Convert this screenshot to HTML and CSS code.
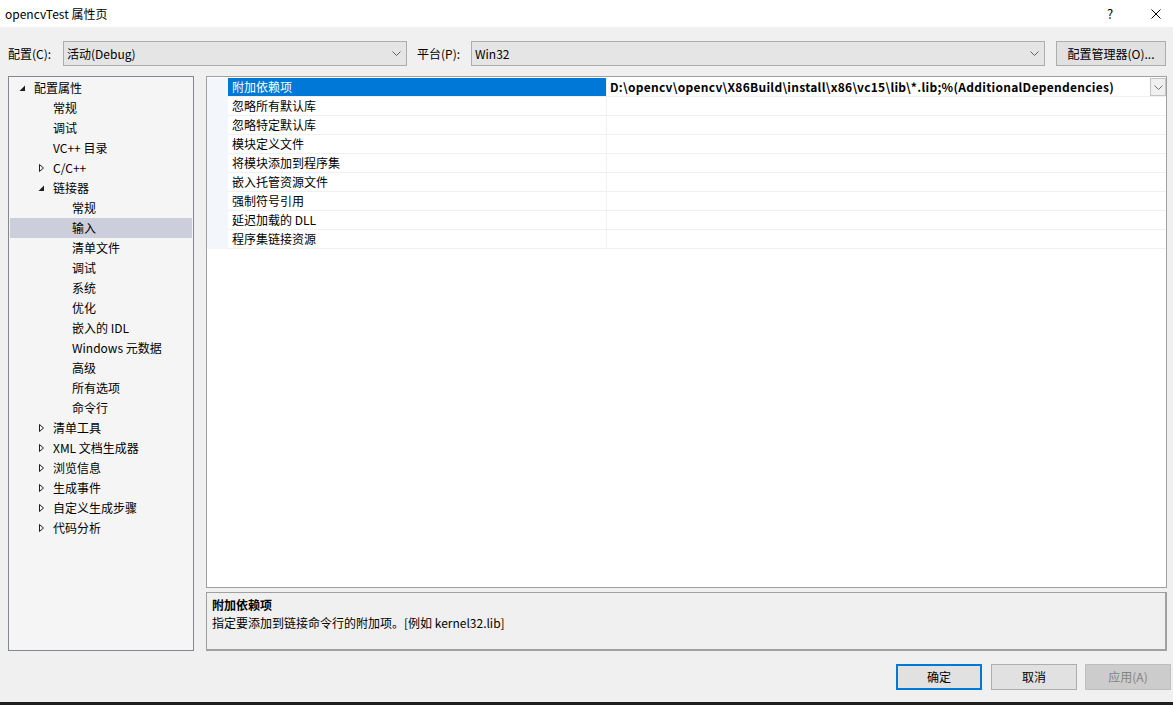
FILE: index.html
```html
<!DOCTYPE html>
<html lang="zh-CN">
<head>
<meta charset="utf-8">
<title>opencvTest 属性页</title>
<link rel="stylesheet" href="styles.css">
</head>
<body>
<div class="window">
  <div class="titlebar">
    <span class="title">opencvTest 属性页</span>
    <div class="title-controls">
      <span class="help">?</span>
      <svg class="close" width="10" height="10" viewBox="0 0 10 10"><path d="M0.5 0.5 L9.5 9.5 M9.5 0.5 L0.5 9.5" stroke="#000" stroke-width="1" fill="none"/></svg>
    </div>
  </div>

  <div class="dialog">
    <div class="config-row">
      <span class="lbl lbl-config">配置(C):</span>
      <div class="combo combo-config">
        <span class="combo-text">活动(Debug)</span>
        <svg class="chev" width="9" height="5" viewBox="0 0 9 5"><path d="M0.5 0.5 L4.5 4.5 L8.5 0.5" stroke="#606060" fill="none"/></svg>
      </div>
      <span class="lbl lbl-platform">平台(P):</span>
      <div class="combo combo-platform">
        <span class="combo-text">Win32</span>
        <svg class="chev" width="9" height="5" viewBox="0 0 9 5"><path d="M0.5 0.5 L4.5 4.5 L8.5 0.5" stroke="#606060" fill="none"/></svg>
      </div>
      <button class="btn btn-manager">配置管理器(O)...</button>
    </div>

    <div class="content">
      <div class="tree">
        <div class="node lv0"><svg class="exp" width="16" height="20" viewBox="0 0 16 20"><polygon points="1.5,13 7,13 7,7.5" fill="#1e1e1e"/></svg><span>配置属性</span></div>
        <div class="node lv1"><span class="noexp"></span><span>常规</span></div>
        <div class="node lv1"><span class="noexp"></span><span>调试</span></div>
        <div class="node lv1"><span class="noexp"></span><span>VC++ 目录</span></div>
        <div class="node lv1"><svg class="exp" width="16" height="20" viewBox="0 0 16 20"><polygon points="2.5,6.5 6.5,10 2.5,13.5" fill="none" stroke="#1e1e1e"/></svg><span>C/C++</span></div>
        <div class="node lv1"><svg class="exp" width="16" height="20" viewBox="0 0 16 20"><polygon points="1.5,13 7,13 7,7.5" fill="#1e1e1e"/></svg><span>链接器</span></div>
        <div class="node lv2"><span class="noexp"></span><span>常规</span></div>
        <div class="node lv2 selected"><span class="noexp"></span><span>输入</span></div>
        <div class="node lv2"><span class="noexp"></span><span>清单文件</span></div>
        <div class="node lv2"><span class="noexp"></span><span>调试</span></div>
        <div class="node lv2"><span class="noexp"></span><span>系统</span></div>
        <div class="node lv2"><span class="noexp"></span><span>优化</span></div>
        <div class="node lv2"><span class="noexp"></span><span>嵌入的 IDL</span></div>
        <div class="node lv2"><span class="noexp"></span><span>Windows 元数据</span></div>
        <div class="node lv2"><span class="noexp"></span><span>高级</span></div>
        <div class="node lv2"><span class="noexp"></span><span>所有选项</span></div>
        <div class="node lv2"><span class="noexp"></span><span>命令行</span></div>
        <div class="node lv1"><svg class="exp" width="16" height="20" viewBox="0 0 16 20"><polygon points="2.5,6.5 6.5,10 2.5,13.5" fill="none" stroke="#1e1e1e"/></svg><span>清单工具</span></div>
        <div class="node lv1"><svg class="exp" width="16" height="20" viewBox="0 0 16 20"><polygon points="2.5,6.5 6.5,10 2.5,13.5" fill="none" stroke="#1e1e1e"/></svg><span>XML 文档生成器</span></div>
        <div class="node lv1"><svg class="exp" width="16" height="20" viewBox="0 0 16 20"><polygon points="2.5,6.5 6.5,10 2.5,13.5" fill="none" stroke="#1e1e1e"/></svg><span>浏览信息</span></div>
        <div class="node lv1"><svg class="exp" width="16" height="20" viewBox="0 0 16 20"><polygon points="2.5,6.5 6.5,10 2.5,13.5" fill="none" stroke="#1e1e1e"/></svg><span>生成事件</span></div>
        <div class="node lv1"><svg class="exp" width="16" height="20" viewBox="0 0 16 20"><polygon points="2.5,6.5 6.5,10 2.5,13.5" fill="none" stroke="#1e1e1e"/></svg><span>自定义生成步骤</span></div>
        <div class="node lv1"><svg class="exp" width="16" height="20" viewBox="0 0 16 20"><polygon points="2.5,6.5 6.5,10 2.5,13.5" fill="none" stroke="#1e1e1e"/></svg><span>代码分析</span></div>
      </div>

      <div class="right">
        <div class="grid">
          <div class="row">
            <div class="gutter"></div>
            <div class="name selected">附加依赖项</div>
            <div class="value">D:\opencv\opencv\X86Build\install\x86\vc15\lib\*.lib;%(AdditionalDependencies)
              <span class="dd"><svg width="9" height="5" viewBox="0 0 9 5"><path d="M0.5 0.5 L4.5 4.5 L8.5 0.5" stroke="#707070" fill="none"/></svg></span>
            </div>
          </div>
          <div class="row"><div class="gutter"></div><div class="name">忽略所有默认库</div><div class="value"></div></div>
          <div class="row"><div class="gutter"></div><div class="name">忽略特定默认库</div><div class="value"></div></div>
          <div class="row"><div class="gutter"></div><div class="name">模块定义文件</div><div class="value"></div></div>
          <div class="row"><div class="gutter"></div><div class="name">将模块添加到程序集</div><div class="value"></div></div>
          <div class="row"><div class="gutter"></div><div class="name">嵌入托管资源文件</div><div class="value"></div></div>
          <div class="row"><div class="gutter"></div><div class="name">强制符号引用</div><div class="value"></div></div>
          <div class="row"><div class="gutter"></div><div class="name">延迟加载的 DLL</div><div class="value"></div></div>
          <div class="row"><div class="gutter"></div><div class="name">程序集链接资源</div><div class="value"></div></div>
        </div>
        <div class="desc">
          <div class="desc-title">附加依赖项</div>
          <div class="desc-text">指定要添加到链接命令行的附加项。[例如 kernel32.lib]</div>
        </div>
      </div>
    </div>

    <div class="footer">
      <button class="btn btn-ok">确定</button>
      <button class="btn btn-cancel">取消</button>
      <button class="btn btn-apply" disabled>应用(A)</button>
    </div>
  </div>

  <div class="strip"></div>
</div>
</body>
</html>
```

FILE: styles.css
```css
* { box-sizing: border-box; }
html, body { margin: 0; padding: 0; }
body {
  width: 1173px;
  height: 705px;
  overflow: hidden;
  background: #f0f0f0;
  font-family: "Noto Sans CJK SC", "Noto Sans", sans-serif;
  font-size: 12px;
  color: #000;
}
.window {
  display: flex;
  flex-direction: column;
  height: 705px;
}

/* title bar */
.titlebar {
  flex: none;
  height: 27px;
  background: #fff;
  display: flex;
  align-items: center;
  padding-left: 5px;
  padding-right: 12px;
}
.title { line-height: 16px; }
.title-controls {
  margin-left: auto;
  display: flex;
  align-items: center;
}
.help {
  width: 10px;
  text-align: center;
  font-size: 13px;
  line-height: 16px;
  margin-right: 36px;
}
.close { display: block; }

/* dialog body */
.dialog {
  flex: none;
  padding-left: 8px;
  display: flex;
  flex-direction: column;
}

.config-row {
  margin-top: 14px;
  height: 25px;
  display: flex;
  align-items: stretch;
}
.lbl {
  display: flex;
  align-items: center;
  line-height: 16px;
}
.lbl-config { width: 55px; }
.lbl-platform { width: 54px; margin-left: 10px; }
.combo {
  display: flex;
  align-items: center;
  background: #e5e5e5;
  border: 1px solid #acacac;
  padding-left: 3px;
  padding-right: 5px;
}
.combo-config { width: 344px; }
.combo-platform { width: 574px; }
.combo-text { line-height: 16px; }
.chev { margin-left: auto; display: block; }

.btn {
  font-family: inherit;
  font-size: 12px;
  color: #000;
  background: #e1e1e1;
  border: 1px solid #adadad;
  padding: 0;
  margin: 0;
  line-height: 16px;
}
.btn-manager {
  width: 110px;
  margin-left: 11px;
}

/* content */
.content {
  margin-top: 10px;
  height: 575px;
  display: flex;
}
.tree {
  width: 186px;
  background: #f5f5f5;
  border: 1px solid #828790;
  padding: 1px;
  overflow: hidden;
}
.node {
  height: 20px;
  display: flex;
  align-items: center;
  line-height: 20px;
  color: #000;
  white-space: nowrap;
}
.node.lv0 { padding-left: 8px; }
.node.lv1 { padding-left: 27px; }
.node.lv2 { padding-left: 46px; }
.node.selected { background: #cccedb; }
.exp { display: block; flex: none; }
.noexp { display: block; width: 16px; flex: none; }

.right {
  width: 961px;
  margin-left: 12px;
  display: flex;
  flex-direction: column;
}
.grid {
  height: 512px;
  background: #fff;
  border: 1px solid #a0a0a0;
  padding-top: 1px;
}
.row {
  display: grid;
  grid-template-columns: 21px 379px 1fr;
  height: 19px;
}
.gutter { background: #f3f6fb; }
.name {
  border-right: 1px solid #f0f0f0;
  border-bottom: 1px solid #f0f0f0;
  padding-left: 4px;
  line-height: 18px;
  white-space: nowrap;
}
.name.selected {
  background: #0078d7;
  color: #fff;
}
.value {
  position: relative;
  border-bottom: 1px solid #f0f0f0;
  padding-left: 3px;
  line-height: 18px;
  font-weight: bold;
  letter-spacing: 0.28px;
  white-space: nowrap;
}
.dd {
  position: absolute;
  right: 0;
  top: 0;
  width: 16px;
  height: 18px;
  background: #f0f0f0;
  border: 1px solid #c4c4c4;
  display: flex;
  align-items: center;
  justify-content: center;
}
.dd svg { display: block; }

.desc {
  margin-top: 4px;
  height: 59px;
  background: #f0f0f0;
  border-top: 1px solid #a0a0a0;
  border-left: 1px solid #a0a0a0;
  border-right: 2px solid #a0a0a0;
  border-bottom: 2px solid #a0a0a0;
  padding: 3px 0 0 5px;
}
.desc-title { font-weight: bold; line-height: 18px; }
.desc-text { line-height: 18px; }

/* footer */
.footer {
  margin-top: 13px;
  height: 26px;
  display: flex;
  padding-left: 888px;
}
.footer .btn { width: 86px; height: 26px; }
.btn-ok { border: 2px solid #0078d7; }
.btn-cancel { margin-left: 9px; }
.btn-apply {
  margin-left: 8px;
  background: #cccccc;
  border-color: #bfbfbf;
  color: #838383;
}

.strip {
  margin-top: auto;
  height: 3px;
  background: #1f1f1f;
  flex: none;
}
```
